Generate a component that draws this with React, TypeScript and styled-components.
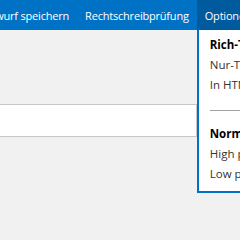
import React from 'react';
import styled, { createGlobalStyle } from 'styled-components';

const GlobalStyle = createGlobalStyle`
  html, body {
    margin: 0;
    padding: 0;
    background: #f1f1f1;
    font-family: "Open Sans", "Noto Sans", sans-serif;
    overflow: hidden;
  }
`;

const Page = styled.div`
  width: 240px;
  height: 240px;
  overflow: hidden;
  position: relative;
`;

const TopBar = styled.div`
  height: 30px;
  background: #0072c6;
  display: flex;
  align-items: stretch;
  white-space: nowrap;
`;

const Commands = styled.div`
  display: flex;
  align-items: stretch;
  margin-left: -29px;
`;

const Command = styled.div<{ $active?: boolean }>`
  position: relative;
  padding: 0 8px;
  background: ${(p) => (p.$active ? '#005a9e' : 'transparent')};
  color: #ffffff;
  font-size: 11px;
  letter-spacing: -0.2px;
  display: flex;
  align-items: center;
  cursor: pointer;
`;

const Dropdown = styled.div`
  position: absolute;
  top: 30px;
  left: 0;
  width: 200px;
  background: #ffffff;
  border: 2px solid #0072c6;
  border-top: 0;
  padding: 5px 0 7px 11px;
  letter-spacing: 0;
  cursor: default;
`;

const MenuItem = styled.div<{ $heading?: boolean }>`
  height: 20px;
  line-height: 20px;
  font-size: 11.5px;
  color: ${(p) => (p.$heading ? '#000000' : '#333333')};
  font-weight: ${(p) => (p.$heading ? 700 : 400)};
`;

const Separator = styled.div`
  height: 1px;
  background: #a0a0a0;
  margin: 15px 0 13px;
`;

const Body = styled.div`
  padding-top: 74px;
`;

const TextField = styled.div`
  box-sizing: border-box;
  margin-left: -1px;
  width: 198px;
  height: 33px;
  background: #ffffff;
  border: 1px solid #c6c6c6;
`;

export default function App() {
  return (
    <Page>
      <GlobalStyle />
      <TopBar>
        <Commands>
          <Command>Entwurf speichern</Command>
          <Command>Rechtschreibprüfung</Command>
          <Command $active>
            Optionen
            <Dropdown>
              <MenuItem $heading>Rich-Text</MenuItem>
              <MenuItem>Nur-Text</MenuItem>
              <MenuItem>In HTML umwandeln</MenuItem>
              <Separator />
              <MenuItem $heading>Normale Wichtigkeit</MenuItem>
              <MenuItem>High priority</MenuItem>
              <MenuItem>Low priority</MenuItem>
            </Dropdown>
          </Command>
        </Commands>
      </TopBar>
      <Body>
        <TextField />
      </Body>
    </Page>
  );
}
